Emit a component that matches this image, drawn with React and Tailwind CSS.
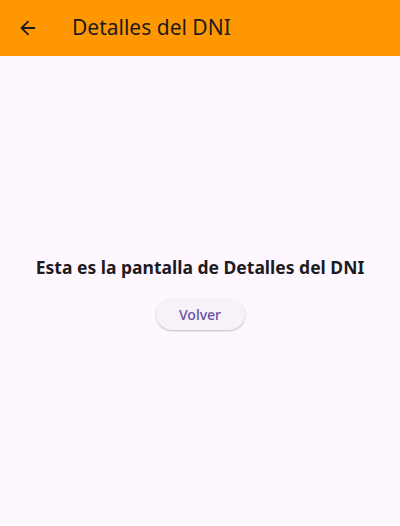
import { ArrowLeft } from 'lucide-react';

export default function App() {
  return (
    <div className="flex flex-col h-[526px] w-[400px] bg-[#fef7ff]" style={{ fontFamily: '"Noto Sans", "Open Sans", sans-serif' }}>
      {/* App bar */}
      <div className="flex items-center h-14 bg-[#ff9800] shrink-0">
        <button className="w-14 h-14 flex items-center justify-center text-[#1d1b20]">
          <ArrowLeft size={22} strokeWidth={2} />
        </button>
        <h1 className="ml-4 text-[21px] text-[#1d1b20]">Detalles del DNI</h1>
      </div>

      {/* Body */}
      <div className="flex-1 flex flex-col items-center justify-center gap-[18px] pt-[2px]">
        <p className="text-[17.5px] font-bold text-[#1d1b20]">Esta es la pantalla de Detalles del DNI</p>
        <button className="h-[32px] w-[89px] rounded-full bg-[#f7f2fa] text-[#6750a4] text-[14px] font-medium shadow-[0_1px_2px_rgba(0,0,0,0.25)]">
          Volver
        </button>
      </div>
    </div>
  );
}
